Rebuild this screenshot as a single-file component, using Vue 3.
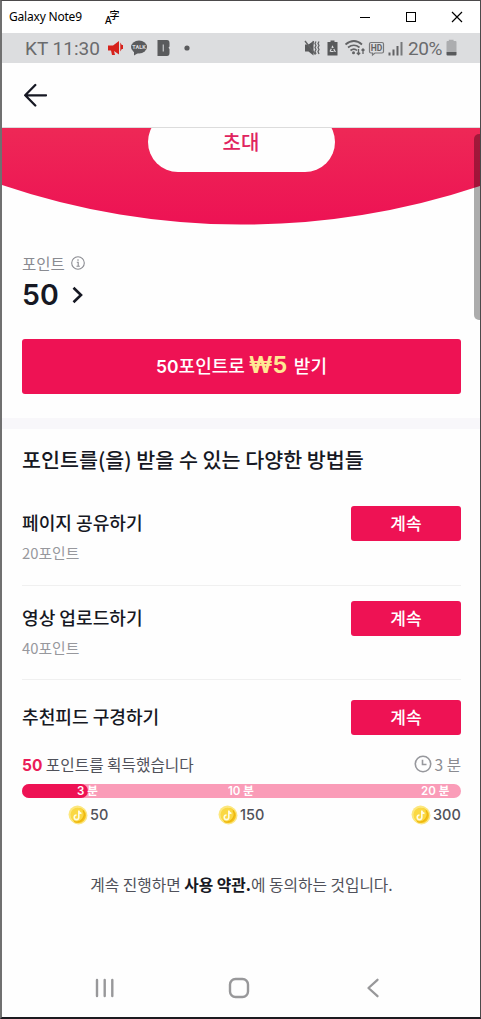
<template>
  <div class="window">
    <div class="titlebar">
      <span class="title">Galaxy Note9</span>
      <span class="lang"><i>A</i><b>字</b></span>
      <svg class="controls" width="112" height="32" viewBox="0 0 112 32" fill="none" stroke="#000" stroke-width="1">
        <path d="M0 16.500h10" />
        <rect x="46.500" y="11.500" width="9" height="9" />
        <path d="M92 11l10 10M102 11l-10 10" stroke-width="1.200" />
      </svg>
    </div>

    <div class="status">
      <span class="clock">KT 11:30</span>
      <svg class="notices" width="84" height="30" viewBox="0 0 84 30">
        <g fill="#d6221c">
          <path d="M0 12.500h5l6-4.500v13.500l-5-3.500 1 4H4l-1-4.500H0z" />
          <path d="M12.300 9.500v9l1.500-2.500h1.200v-4h-1.200z" />
        </g>
        <ellipse cx="31" cy="14" rx="8" ry="6.500" fill="#5a5b5d" />
        <path d="M26 18v4.500l5-3z" fill="#5a5b5d" />
        <text x="31" y="16" text-anchor="middle" class="talk">TALK</text>
        <path d="M49.500 7H59q2.500 0 2.500 3v3.500l-1 1.300 1 1.300V20q0 3-2.500 3h-9.500z" fill="#5a5b5d" />
        <path d="M55.300 11.500v7" stroke="#bfc0c2" stroke-width="1.300" />
        <circle cx="79" cy="15" r="2.600" fill="#5a5b5d" />
      </svg>
      <svg class="signals" width="102" height="30" viewBox="0 0 102 30" fill="none" stroke="#626365" stroke-width="1.400">
        <path d="M1 11.500h3.500L9.500 8v14.500L4.500 18.500H1z" fill="#58595b" stroke="none" />
        <path d="M1 8l10.500 13.500M9.500 8l-.8 3.500" />
        <path d="M12 8.500l-1 2 1 2-1 2 1 2-1 2 1 2.500M15 8.500l-1 2 1 2-1 2 1 2-1 2 1 2.500" stroke-width="1.300" />
        <path d="M23.500 9h3V7.500h4V9h3v13.500h-10z" fill="#58595b" stroke="none" />
        <path d="M26 18.500l2.500-5 2.500 5z" stroke="#dcdddf" stroke-width="1.200" stroke-dasharray="3 1.200" />
        <path d="M41.500 11.500Q50 4.500 58 11.500M44 14.500q6-4.500 11.500 0M46.500 17.500q3.500-2.800 6.500 0" stroke-width="1.700" />
        <circle cx="49.500" cy="19.800" r="1.500" fill="#626365" stroke="none" />
        <path d="M54.500 16V21.500m-1.700-1.700L54.500 21.500l1.700-1.700M59 21v-5m-1.500 1.500L59 16l1.500 1.500" stroke-width="1.300" />
        <path d="M67 9.500h11q1.500 0 1.500 1.500v7.500q0 1.500-1.500 1.500h-7l-2.500 2v-2H67q-1.500 0-1.500-1.500V11q0-1.500 1.500-1.500z" stroke="#77787a" stroke-width="1.200" />
        <text x="72.500" y="17.700" text-anchor="middle" class="hd">HD</text>
        <path d="M85.500 19.500V22.500M89.500 16.500v6M93.500 13v9.500" stroke-width="2" />
        <path d="M97.500 9v13.500" stroke-width="2" stroke="#77787a" />
      </svg>
      <span class="percent">20%</span>
      <svg class="battery" width="11" height="30" viewBox="0 0 11 30">
        <path d="M.5 9q0-1 1-1h1.300V6.800h4.800V8H9.500q1 0 1 1v10H.5z" fill="#acadaf" />
        <path d="M.5 19h10v2.500q0 1-1 1h-8q-1 0-1-1z" fill="#58595b" />
      </svg>
    </div>

    <header class="header">
      <svg width="24" height="24" viewBox="0 0 24 24" fill="none" stroke="#161823" stroke-width="2.300" stroke-linecap="round" stroke-linejoin="round">
        <path d="M12.300 2L2.200 12.300l10.100 10.200M2.200 12.300H23" />
      </svg>
    </header>

    <section class="hero">
      <svg class="curve" width="478" height="98" viewBox="0 0 478 98">
        <defs>
          <linearGradient id="heroFill" x1="0" y1="0" x2="0" y2="1">
            <stop offset="0" stop-color="#ee2856" />
            <stop offset="1" stop-color="#ed1254" />
          </linearGradient>
        </defs>
        <path d="M0 0H478V58A750 750 0 0 1 0 57Z" fill="url(#heroFill)" />
      </svg>
      <div class="invite">초대</div>
    </section>

    <section class="points">
      <div class="points-label">
        포인트
        <svg width="14" height="14" viewBox="0 0 14 14" fill="none" stroke="#8a8b91" stroke-width="1.100">
          <circle cx="7" cy="7" r="6.300" />
          <path d="M5.800 6.300H7.200V10M5.500 10.200H8.800" />
          <circle cx="7" cy="4" r=".5" fill="#8a8b91" stroke-width=".5" />
        </svg>
      </div>
      <div class="points-value">
        50
        <svg width="12" height="18" viewBox="0 0 12 18" fill="none" stroke="#161823" stroke-width="2.600">
          <path d="M1.500 1.800L9 9l-7.500 7.200" />
        </svg>
      </div>
      <div class="claim">
        <span class="claim-from"><em>50</em>포인트로</span>
        <strong>₩5</strong>
        <span>받기</span>
      </div>
    </section>

    <section class="ways">
      <h2>포인트를(을) 받을 수 있는 다양한 방법들</h2>
      <div v-for="task in tasks" :key="task.name" class="task">
        <div>
          <div class="task-name">{{ task.name }}</div>
          <div v-if="task.points" class="task-points">{{ task.points }}포인트</div>
        </div>
        <div class="go">계속</div>
      </div>

      <div class="earned">
        <span><b>50</b> 포인트를 획득했습니다</span>
        <span class="time">
          <svg width="18" height="18" viewBox="0 0 18 18" fill="none" stroke="#97989d" stroke-width="1.600">
            <circle cx="9" cy="9" r="7.700" />
            <path d="M8.500 4.800V9.500H12.500" />
          </svg>
          3 분
        </span>
      </div>
      <div class="bar">
        <div class="bar-fill" :style="{ width: progress + '%' }"></div>
        <div class="bar-labels">
          <span v-for="s in stages" :key="s.minutes">{{ s.minutes }} 분</span>
        </div>
      </div>
      <div class="rewards">
        <div v-for="s in stages" :key="s.coins" class="reward">
          <svg width="20" height="20" viewBox="0 0 20 20">
            <circle cx="10.500" cy="10.500" r="9" fill="#fbe58a" />
            <circle cx="9.500" cy="9.500" r="9" fill="#fce77f" />
            <circle cx="10.500" cy="10.500" r="7.500" fill="#f5c51c" />
            <circle cx="9.500" cy="9.800" r="7" fill="#fad844" />
            <path d="M15 5.500a7.500 7.500 0 0 1-9 11" fill="none" stroke="#edb60f" stroke-width="1.300" />
            <path d="M10.800 5.500v6.800a2.300 2.300 0 1 1-2.300-2.300M10.800 6q.5 2.200 2.700 2.500" fill="none" stroke="#fffbe5" stroke-width="1.600" />
          </svg>
          <span>{{ s.coins }}</span>
        </div>
      </div>
      <p class="terms">계속 진행하면 <b>사용 약관.</b>에 동의하는 것입니다.</p>
    </section>

    <nav class="navbar">
      <svg width="20" height="20" viewBox="0 0 20 20" fill="none" stroke="#98989a" stroke-width="2.400" stroke-linecap="round">
        <path d="M2 2v16M9.700 2v16M17.300 2v16" />
      </svg>
      <svg class="home" width="22" height="22" viewBox="0 0 22 22" fill="none" stroke="#98989a" stroke-width="2.400">
        <rect x="2" y="2" width="18" height="18" rx="5.500" />
      </svg>
      <svg width="14" height="20" viewBox="0 0 14 20" fill="none" stroke="#98989a" stroke-width="2.300" stroke-linecap="round" stroke-linejoin="round">
        <path d="M11.500 1.800L2.500 10l9 8.200" />
      </svg>
    </nav>
    <div class="scrollbar"></div>
  </div>
</template>

<script setup>
const tasks = [
  { name: '페이지 공유하기', points: 20 },
  { name: '영상 업로드하기', points: 40 },
  { name: '추천피드 구경하기' }
]

const stages = [
  { minutes: 3, coins: 50 },
  { minutes: 10, coins: 150 },
  { minutes: 20, coins: 300 }
]

const progress = 15.1
</script>

<style>
html, body { margin: 0; background: #fefefe; }
</style>

<style scoped>
* { box-sizing: border-box; }
.window { position: relative; width: 481px; height: 1019px; overflow: hidden; background: #fefefe;
          border: solid #4c4a4b; border-width: 1px 1px 2px 2px; border-left-color: #707070;
          border-bottom-color: #1c1b20; display: flex; flex-direction: column; color: #161823;
          font-family: "Noto Sans CJK KR", sans-serif; white-space: nowrap; }
svg { display: block; flex-shrink: 0; }

.titlebar { height: 32px; display: flex; align-items: center; padding: 0 12px 0 7px; background: #fff;
            color: #000; flex-shrink: 0; }
.title { width: 96px; font: 12px/32px "Noto Sans", sans-serif; letter-spacing: -0.2px; }
.lang { display: flex; width: 20px; height: 17px; }
.lang i { font: 500 10px/12px "Noto Sans", sans-serif; align-self: flex-end; }
.lang b { font-size: 10px; font-weight: 500; line-height: 12px; margin-left: -2px; }
.controls { margin-left: auto; margin-right: -4px; }

.status { height: 30px; display: flex; align-items: center; padding: 0 22px 0 23px; background: #dcdddf;
          color: #6a6b6d; font-family: Roboto, sans-serif; font-size: 19px; flex-shrink: 0; }
.clock { width: 82px; font-size: 19px; padding-top: 1px; }
.notices { margin-left: 1px; }
.talk { font: 700 5.5px Roboto, sans-serif; fill: #dcdddf; }
.signals { margin-left: auto; }
.hd { font: 700 8.5px Roboto, sans-serif; fill: #626365; stroke: none; }
.percent { width: 38px; margin-left: 2px; padding-top: 1px; letter-spacing: -0.4px; }
.battery { margin-right: 1px; }

.header { height: 65px; padding: 20px 21px; border-bottom: 1px solid #dcdcdc; flex-shrink: 0; }

.hero { position: relative; height: 98px; overflow: hidden; display: flex; justify-content: center;
        align-items: flex-start; flex-shrink: 0; }
.curve { position: absolute; left: 0; top: 0; }
/* only the lower part of the pill is left below the header */
.invite { position: relative; width: 187px; height: 60px; margin-top: -16px; padding-top: 16px;
          border-radius: 30px; background: #fefefe; color: #e0245e; font-size: 20px; font-weight: 500;
          line-height: 28px; text-align: center; }

.points { height: 203px; padding: 26px 19px 0 20px; border-bottom: 11px solid #f8f7fa; flex-shrink: 0; }
.points-label { display: flex; align-items: center; gap: 6px; height: 22px; font-size: 15.5px; color: #8a8b91; }
.points-value { display: flex; align-items: center; gap: 13px; height: 42px; font: 600 28.5px/42px Inter, sans-serif; }
.claim { height: 55px; margin-top: 23px; display: flex; align-items: center; justify-content: center;
         background: #ee1254; border-radius: 3px; color: #fff; font-size: 18px; font-weight: 500;
         padding-bottom: 4px; }
.claim em { font: 600 17.5px Inter, sans-serif; }
.claim strong { margin: 0 7px 0 4px; font: 700 23px/30px Inter, sans-serif; letter-spacing: -0.3px; color: #ffe893; }

.ways { padding: 14px 19px 0 20px; }
h2 { margin: 0; font-size: 20.65px; font-weight: 500; line-height: 33px; }
.task { height: 94px; padding-top: 15px; display: flex; justify-content: space-between; align-items: flex-start;
        border-bottom: 1px solid #f0f0f0; }
h2 + .task { height: 110px; padding-top: 30px; }
.task:nth-of-type(3) { height: 76px; padding-top: 20px; border: 0; }
.task-name { height: 32px; font-size: 18.1px; font-weight: 500; line-height: 32px; }
.task-points { font-size: 14.8px; line-height: 30px; color: #97989d; }
.go { width: 110px; height: 35px; border-radius: 3px; background: #ee1254; color: #fff; font-size: 17px;
      font-weight: 500; line-height: 33px; text-align: center; }
.earned { display: flex; justify-content: space-between; align-items: center; height: 28px; margin-bottom: 6px;
          font-size: 15.7px; color: #50515a; margin-top: -6px; }
.earned b { font: 700 15.5px Inter, sans-serif; color: #ea1c58; }
.time { display: flex; align-items: center; gap: 3px; color: #8a8b91; font-size: 15.6px; }
.bar { position: relative; height: 14px; border-radius: 7px; background: #fa9cb8; }
.bar-fill { height: 14px; border-radius: 7px; background: #ee1254; }
.bar-labels { position: absolute; left: 55px; top: 0; display: grid; grid-template-columns: 151px 193px auto;
              font: 600 11.5px/14px Inter, "Noto Sans CJK KR", sans-serif; color: #fff; }
.rewards { display: grid; grid-template-columns: 150px 193px auto; padding: 7px 0 0 46px; }
.reward { display: flex; align-items: center; gap: 2px; height: 20px; font: 500 14.5px/20px Inter, sans-serif;
          color: #50515a; }
.reward span { margin-top: -1px; }
.terms { margin: 48px 0 0; font-size: 15.75px; line-height: 24px; color: #50515a; text-align: center; }
.terms b { color: #161823; font-weight: 700; }

.navbar { display: flex; align-items: center; justify-content: space-between; height: 58px; margin-top: auto;
          padding: 0 100px 0 93px; flex-shrink: 0; }
.home { margin-right: 4px; }
.scrollbar { position: absolute; left: 472px; top: 133px; width: 8px; height: 186px; border-radius: 5px 0 0 5px;
             background: rgba(0, 0, 0, 0.32); }
</style>
